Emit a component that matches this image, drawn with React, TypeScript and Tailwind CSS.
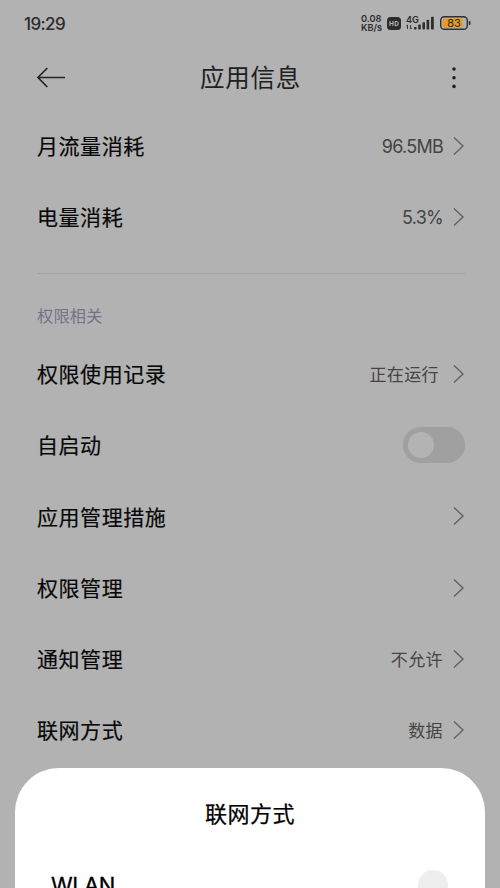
import React from 'react';

interface Row {
  label: string;
  value?: string;
  latin?: boolean;
  toggle?: boolean;
  gap?: string;
}

const usageRows: Row[] = [
  { label: '月流量消耗', value: '96.5MB', latin: true },
  { label: '电量消耗', value: '5.3%', latin: true },
];

const permissionRows: Row[] = [
  { label: '权限使用记录', value: '正在运行', gap: 'mr-[14px]' },
  { label: '自启动', toggle: true },
  { label: '应用管理措施' },
  { label: '权限管理' },
  { label: '通知管理', value: '不允许' },
  { label: '联网方式', value: '数据' },
];

const Chevron = () => (
  <svg width="12" height="20" viewBox="0 0 12 20" fill="none" stroke="#626262" strokeWidth="1.4">
    <path d="M1 1.5 L10 10 L1 18.5" />
  </svg>
);

const Toggle = () => (
  <div className="flex h-9 w-[62px] items-center rounded-full bg-[#a0a0a0] pl-[5px]">
    <div className="size-[26px] rounded-full bg-[#b3b3b3]" />
  </div>
);

const SettingRow: React.FC<{ row: Row }> = ({ row }) => (
  <div className="flex h-[71.3px] items-center">
    <span className="flex-1 pb-[0.6px] text-[21px] leading-none tracking-[0.55px] text-[#080808] [-webkit-text-stroke:0.2px_#080808]">
      {row.label}
    </span>
    {row.value && (
      <span
        className={`leading-none text-[#444444] ${row.gap ?? 'mr-2.5'} ${
          row.latin ? 'pt-[2px] font-[Inter] text-[18px] tracking-[-0.75px]' : 'pb-px text-[17px] tracking-[0.4px]'
        }`}
      >
        {row.value}
      </span>
    )}
    {row.toggle ? <Toggle /> : <Chevron />}
  </div>
);

const StatusBar = () => (
  <div className="flex h-[46px] items-center justify-between pl-6 pr-[29px] font-[Inter] text-[#2c2c2c]">
    <span className="pt-[2px] text-[17px] font-medium leading-none tracking-[-0.6px]">19:29</span>
    <div className="flex items-center">
      <div className="w-[23px] pt-px text-[9.2px] font-semibold leading-[8.5px]">
        <div>0.08</div>
        <div>KB/s</div>
      </div>
      <svg className="ml-[3px]" width="14" height="13" viewBox="0 0 14 13">
        <rect width="14" height="13" rx="3.5" fill="#2c2c2c" />
        <path d="M3 4v5M3 6.5h3M6 4v5M8.2 4.5v4h1.2q1.8 0 1.8-2t-1.8-2z" fill="none" stroke="#b2b2b2" strokeWidth="1.1" />
      </svg>
      <svg className="ml-[5px]" width="29" height="16" viewBox="0 0 29 16" fill="#2c2c2c">
        <text x="0" y="7.8" fontSize="9.2" fontWeight="600" fontFamily="Inter, sans-serif">4G</text>
        <path d="M1.5 10v4M.3 11.2L1.5 10M4.6 10v4M4.6 14l1.3-1.2" fill="none" stroke="#2c2c2c" strokeWidth="0.9" />
        <rect x="8" y="12" width="2.6" height="2.6" rx="0.8" />
        <rect x="12.2" y="9.6" width="2.6" height="5" rx="0.8" />
        <rect x="16.4" y="7.2" width="2.6" height="7.4" rx="0.8" />
        <rect x="20.6" y="4.8" width="2.6" height="9.8" rx="0.8" />
        <rect x="25" y="1.8" width="2.8" height="12.8" rx="0.8" />
      </svg>
      <svg className="ml-[5px]" width="31" height="14" viewBox="0 0 31 14">
        <rect x="0.7" y="0.7" width="26.6" height="12.6" rx="3.6" fill="#b2b2b2" stroke="#303030" strokeWidth="1.4" />
        <path d="M4.6 2.3H22.5V11.7H4.6Q2.3 11.7 2.3 9.4V4.6Q2.3 2.3 4.6 2.3Z" fill="#e59a32" />
        <rect x="28.8" y="5" width="1.7" height="4" rx="0.7" fill="#303030" />
        <text x="14" y="11" textAnchor="middle" fontSize="11" fontFamily="Inter, sans-serif" fill="#332a1c">83</text>
      </svg>
    </div>
  </div>
);

const TitleBar = () => (
  <div className="mb-px grid h-[63.3px] grid-cols-[1fr_auto_1fr] items-center pl-9 pr-[35px]">
    <svg width="30" height="22" viewBox="0 0 30 22" fill="none" stroke="#242424" strokeWidth="1.7">
      <path d="M29 10.5H2M11.3 1L2 10.5L11.3 20" />
    </svg>
    <h1 className="text-[24.5px] leading-none tracking-[0.7px] text-[#202020]">应用信息</h1>
    <svg className="mr-[7px] justify-self-end" width="8" height="22" viewBox="0 0 8 22" fill="#242424">
      <circle cx="4" cy="2" r="1.8" />
      <circle cx="4" cy="10.7" r="1.8" />
      <circle cx="4" cy="19.4" r="1.8" />
    </svg>
  </div>
);

const NetworkSheet = () => (
  <div className="absolute inset-x-[15px] top-[768px] h-[120px] overflow-hidden rounded-t-[44px] bg-white">
    <h2 className="mt-[33px] text-center text-[22px] leading-[22px] tracking-[0.5px] text-black [-webkit-text-stroke:0.25px_#000]">
      联网方式
    </h2>
    <div className="mt-[38px] flex h-12 items-center justify-between pl-9 pr-[37px]">
      <span className="font-[Inter] text-[22px] leading-none tracking-[-0.5px] text-black [-webkit-text-stroke:0.3px_#000]">WLAN</span>
      <div className="size-[30px] rounded-full bg-[#eeeeee]" />
    </div>
  </div>
);

export default function App() {
  return (
    <div className="relative h-[888px] w-[500px] overflow-hidden bg-[#b2b2b2] font-['Noto_Sans_CJK_SC',sans-serif]">
      <StatusBar />
      <TitleBar />
      <div className="pl-[37px] pr-[35px]">
        {usageRows.map((row) => (
          <SettingRow key={row.label} row={row} />
        ))}
        <div className="mt-5 h-px bg-[#a1a1a1]" />
        <div className="mt-8 mb-[14.2px] text-[16.2px] leading-[18px] tracking-[0.2px] text-[#73738b]">权限相关</div>
        {permissionRows.map((row) => (
          <SettingRow key={row.label} row={row} />
        ))}
      </div>
      <NetworkSheet />
    </div>
  );
}
